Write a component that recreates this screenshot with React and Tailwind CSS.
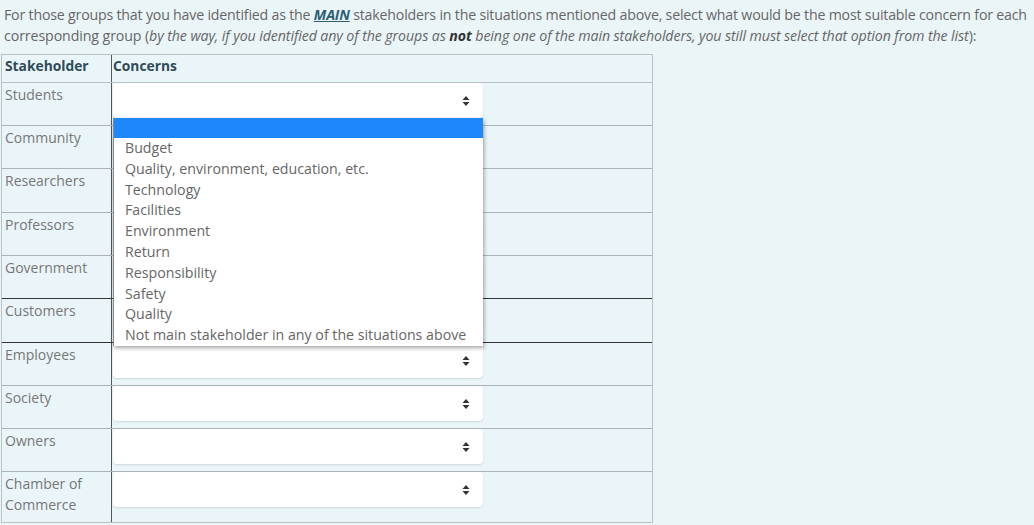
import React from "react";

const rows = [
  { name: "Students", h: "h-[43px]" },
  { name: "Community", h: "h-[43px]" },
  { name: "Researchers", h: "h-[44px]" },
  { name: "Professors", h: "h-[43px]" },
  { name: "Government", h: "h-[43px]", dark: true },
  { name: "Customers", h: "h-[44px]", dark: true },
  { name: "Employees", h: "h-[43px]" },
  { name: "Society", h: "h-[43px]" },
  { name: "Owners", h: "h-[43px]" },
  { name: "Chamber of Commerce", h: "h-[50px]", last: true },
];

const options = [
  "Budget",
  "Quality, environment, education, etc.",
  "Technology",
  "Facilities",
  "Environment",
  "Return",
  "Responsibility",
  "Safety",
  "Quality",
  "Not main stakeholder in any of the situations above",
];

function Arrows() {
  return (
    <svg width="8" height="12" viewBox="0 0 8 12" className="text-[#333]">
      <path d="M4 1 L7.5 5 L0.5 5 Z" fill="currentColor" />
      <path d="M4 11 L7.5 7 L0.5 7 Z" fill="currentColor" />
    </svg>
  );
}

function Select() {
  return (
    <div className="w-[370px] h-[35px] bg-white rounded-[4px] shadow-[0_1px_2px_rgba(0,0,0,0.12)] flex items-center justify-end pr-[13px]">
      <Arrows />
    </div>
  );
}

function App() {
  return (
    <div className="w-[1034px] h-[525px] bg-[#eaf5f8] text-[#666] relative overflow-hidden font-['Open_Sans',sans-serif]">
      <p className="text-[14.2px] leading-[21px] pt-[4px] pl-[4px] whitespace-nowrap tracking-[-0.2px]">
        For those groups that you have identified as the{" "}
        <a className="font-bold italic underline text-[#2c5f74]">MAIN</a> stakeholders in the situations mentioned above, select what would be the most suitable concern for each
        <br />
        <span className="tracking-[-0.1px]">
          corresponding group (
          <i>
            by the way, if you identified any of the groups as <b className="text-[#333]">not</b> being one of the main stakeholders, you still must select that option from the list
          </i>
          ):
        </span>
      </p>

      <div className="absolute left-[1px] top-[54px] w-[652px] border border-[#b9c2c6] bg-[#eaf5f9]">
        <div className="flex h-[28px] border-b border-[#b9c2c6]">
          <div className="w-[110px] pl-[3px] pt-[1px] font-bold text-[13.8px] text-[#2f4b57] border-r border-[#555]">Stakeholder</div>
          <div className="flex-1 pl-[1px] pt-[1px] font-bold text-[13.8px] text-[#2f4b57]">Concerns</div>
        </div>
        {rows.map((r) => (
          <div
            key={r.name}
            className={`flex ${r.h} ${r.last ? "" : r.dark ? "border-b border-[#333]" : "border-b border-[#a9b3b8]"}`}
          >
            <div className="w-[110px] pl-[3px] pt-[1px] text-[14px] leading-[21px] text-[#777] border-r border-[#555]">
              {r.name}
            </div>
            <div className="flex-1 pl-[1px]">
              <Select />
            </div>
          </div>
        ))}
      </div>

      <div className="absolute left-[113px] top-[118px] w-[370px] bg-white shadow-[1px_2px_4px_rgba(0,0,0,0.35)] border-l border-[#888]">
        <div className="h-[20px] bg-[#1e88fa]" />
        {options.map((o) => (
          <div key={o} className="h-[20.8px] leading-[20.8px] pl-[11px] text-[14.2px] text-[#666] whitespace-nowrap">
            {o}
          </div>
        ))}
      </div>
    </div>
  );
}

export default App;
